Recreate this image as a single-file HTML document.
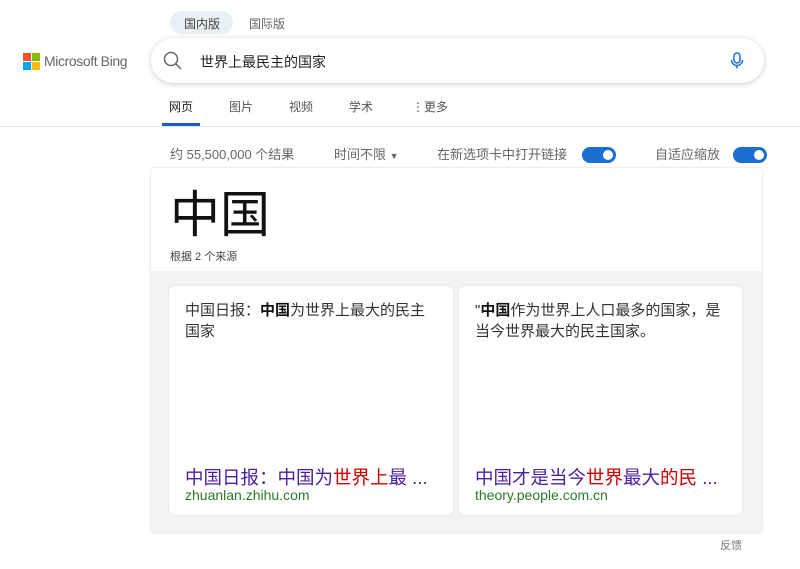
<!DOCTYPE html>
<html><head><meta charset="utf-8"><style>
*{margin:0;padding:0;box-sizing:border-box}
body{width:800px;height:569px;background:#fff;position:relative;overflow:hidden;font-family:"Liberation Sans","Noto Sans CJK SC",sans-serif;color:#444}
.a{position:absolute;white-space:nowrap}
.tog{position:absolute;width:34px;height:16px;border-radius:8px;background:#1a6fd0}
.tog::after{content:"";position:absolute;right:3px;top:3px;width:10px;height:10px;border-radius:50%;background:#fff}
</style></head><body>
<div class="a" style="left:170px;top:11px;width:63px;height:23px;border-radius:12px;background:#e8f0f5"></div>
<div class="a" style="left:184px;top:15px;font-size:12px;color:#444">国内版</div>
<div class="a" style="left:249px;top:15px;font-size:12px;color:#666">国际版</div>
<svg class="a" style="left:23px;top:53px" width="17" height="17"><rect x="0" y="0" width="8" height="8" fill="#f35325"/><rect x="9" y="0" width="8" height="8" fill="#81bc06"/><rect x="0" y="9" width="8" height="8" fill="#05a6f0"/><rect x="9" y="9" width="8" height="8" fill="#ffba08"/></svg>
<div class="a" style="left:44px;top:53px;font-size:14px;color:#666;letter-spacing:-0.4px">Microsoft Bing</div>
<div class="a" style="left:151px;top:38px;width:613px;height:45px;border-radius:23px;background:#fff;box-shadow:0 1px 6px rgba(0,0,0,.2)"></div>
<svg class="a" style="left:163px;top:51px" width="20" height="20"><circle cx="8" cy="8" r="6.5" fill="none" stroke="#666" stroke-width="1.5"/><line x1="12.8" y1="12.8" x2="18" y2="18" stroke="#666" stroke-width="1.5"/></svg>
<div class="a" style="left:200px;top:52px;font-size:14px;color:#222">世界上最民主的国家</div>
<svg class="a" style="left:730px;top:52px" width="14" height="18"><rect x="4" y="1" width="6" height="10" rx="3" fill="none" stroke="#1a6fd0" stroke-width="1.5"/><path d="M1.5 8a5.5 5.5 0 0 0 11 0M7 13.5v3" fill="none" stroke="#1a6fd0" stroke-width="1.5"/></svg>
<div class="a" style="left:169px;top:98px;font-size:12px;color:#222">网页</div>
<div class="a" style="left:162px;top:123px;width:38px;height:3px;background:#1a5fc8"></div>
<div class="a" style="left:229px;top:98px;font-size:12px;color:#555">图片</div>
<div class="a" style="left:289px;top:98px;font-size:12px;color:#555">视频</div>
<div class="a" style="left:349px;top:98px;font-size:12px;color:#555">学术</div>
<div class="a" style="left:412px;top:98px;font-size:12px;color:#555">⋮更多</div>
<div class="a" style="left:0;top:126px;width:800px;height:1px;background:#e5e5e5"></div>
<div class="a" style="left:170px;top:144px;font-size:13px;color:#666">约 55,500,000 个结果</div>
<div class="a" style="left:334px;top:144px;font-size:13px;color:#666">时间不限 <span style="font-size:9px">▼</span></div>
<div class="a" style="left:437px;top:144px;font-size:13px;color:#666">在新选项卡中打开链接</div>
<div class="tog" style="left:582px;top:147px"></div>
<div class="a" style="left:655px;top:144px;font-size:13px;color:#666">自适应缩放</div>
<div class="tog" style="left:733px;top:147px"></div>
<div class="a" style="left:151px;top:168px;width:611px;height:365px;border-radius:4px;background:#f3f3f3;box-shadow:0 0 2px rgba(0,0,0,.2)"></div>
<div class="a" style="left:151px;top:168px;width:611px;height:103px;background:#fff;border-radius:4px 4px 0 0"></div>
<div class="a" style="left:170px;top:185px;font-size:50px;line-height:60px;color:#111">中国</div>
<div class="a" style="left:170px;top:248px;font-size:11px;color:#444">根据 2 个来源</div>
<div class="a" style="left:169px;top:286px;width:284px;height:229px;background:#fff;border-radius:6px;box-shadow:0 0 2px rgba(0,0,0,.12)"></div>
<div class="a" style="left:459px;top:286px;width:283px;height:229px;background:#fff;border-radius:6px;box-shadow:0 0 2px rgba(0,0,0,.12)"></div>
<div class="a" style="left:185px;top:300px;font-size:15px;line-height:21px;color:#333">中国日报：<b style="color:#111">中国</b>为世界上最大的民主<br>国家</div>
<div class="a" style="left:475px;top:300px;font-size:15px;line-height:21px;color:#333">"<b style="color:#111">中国</b>作为世界上人口最多的国家，是<br>当今世界最大的民主国家。</div>
<div class="a" style="left:185px;top:464px;font-size:18.5px;color:#4a1fa0">中国日报：中国为<span style="color:#c00">世界上</span>最 ...</div>
<div class="a" style="left:185px;top:487px;font-size:14px;color:#2a7a2a">zhuanlan.zhihu.com</div>
<div class="a" style="left:475px;top:464px;font-size:18.5px;color:#4a1fa0">中国才是当今<span style="color:#c00">世界</span>最大<span style="color:#c00">的民</span> ...</div>
<div class="a" style="left:475px;top:487px;font-size:14px;color:#2a7a2a">theory.people.com.cn</div>
<div class="a" style="left:720px;top:537px;font-size:11px;color:#777">反馈</div>
</body></html>
